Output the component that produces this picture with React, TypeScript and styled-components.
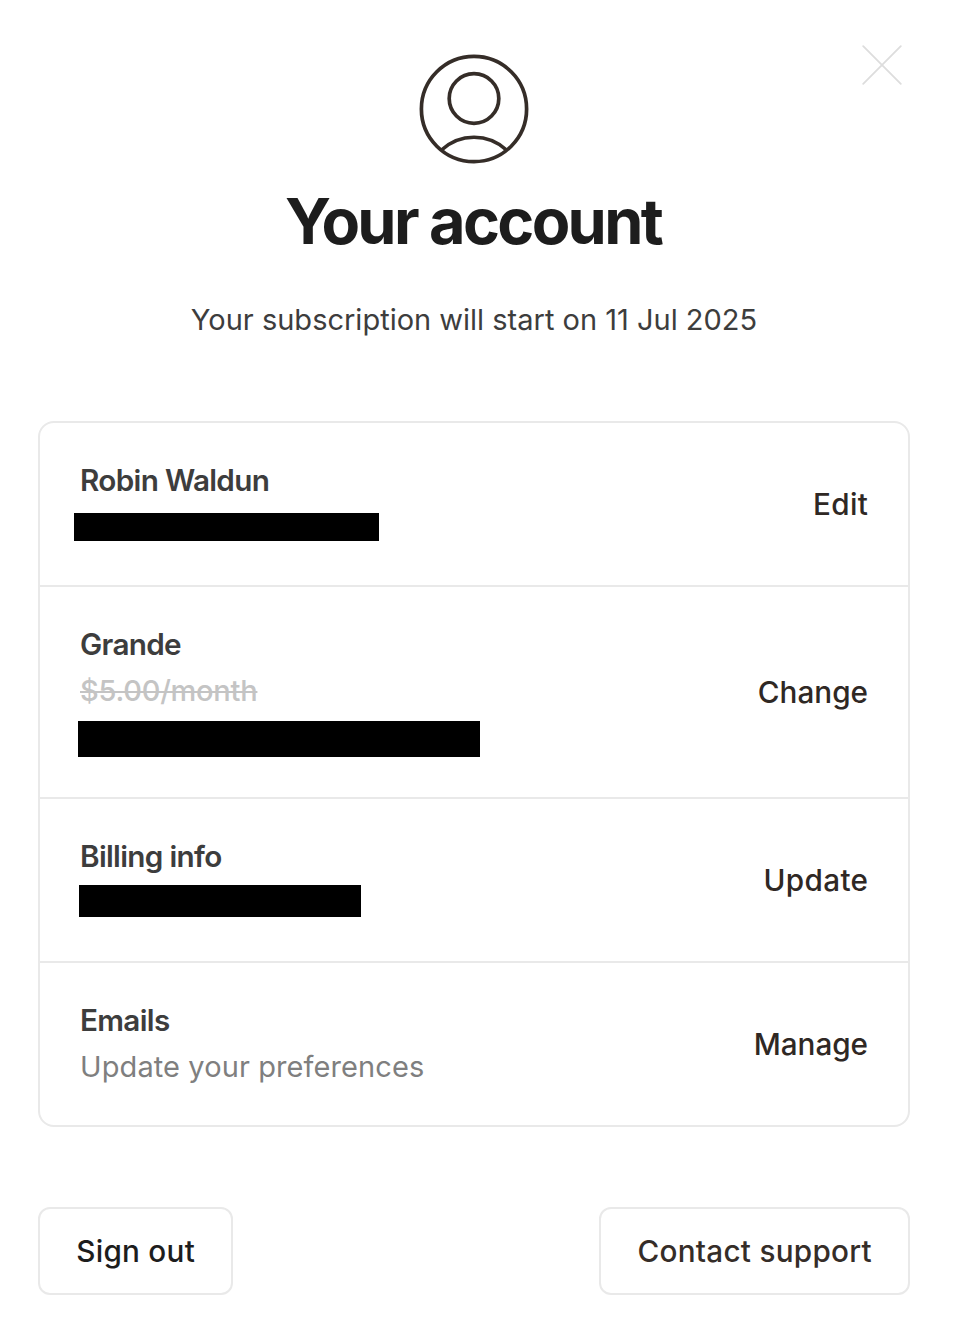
import React from 'react';
import styled, { createGlobalStyle } from 'styled-components';

const Global = createGlobalStyle`
  * { box-sizing: border-box; }
  body { margin: 0; background: #fff; font-family: Inter, "Liberation Sans", sans-serif; -webkit-font-smoothing: antialiased; }
  button { font-family: inherit; background: none; border: 0; padding: 0; margin: 0; }
`;
const Popup = styled.main`
  position: relative; width: 956px; height: 1324px; padding: 54px 46px 0 38px; background: #fff; overflow: hidden;
`;
const CloseButton = styled.button`
  position: absolute; top: 45px; right: 54px; width: 40px; height: 40px;
  svg { display: block; }
`;
const Header = styled.header`
  display: flex; flex-direction: column; align-items: center;
`;
const Title = styled.h1`
  margin: 23px 0 0; font-size: 63px; line-height: 68px; font-weight: 740; color: #1d1d1d; white-space: nowrap;
  letter-spacing: -2.7px; text-indent: -2px;
`;
const Notice = styled.p`
  margin: 44px 0 0; font-size: 29px; line-height: 42px; color: #3d3d3d; white-space: nowrap;
`;
const List = styled.section`
  margin-top: 80px; border: 2px solid #e9e9e9; border-radius: 16px;
`;
const Row = styled.div<{ $height: number }>`
  display: flex; justify-content: space-between; height: ${p => p.$height}px; padding: 34px 40px 0;
  & + & { border-top: 2px solid #e9e9e9; }
`;
const Name = styled.h3`
  margin: 0; font-size: 29.7px; line-height: 46px; font-weight: 620; color: #3d3d3d; white-space: nowrap; letter-spacing: -0.68px;
`;
const Detail = styled.p<{ $old?: boolean }>`
  margin: 0; padding-top: 1px; font-size: 29px; line-height: 46px; white-space: nowrap;
  letter-spacing: ${p => (p.$old ? -0.25 : 0.1)}px;
  font-weight: ${p => (p.$old ? 450 : 400)};
  color: ${p => (p.$old ? '#c4c4c4' : '#7f7f7f')};
  text-decoration: ${p => (p.$old ? 'line-through' : 'none')};
  text-decoration-thickness: 2px;
`;
const Redacted = styled.div<{ $width: number; $height: number; $top: number; $left: number }>`
  width: ${p => p.$width}px; height: ${p => p.$height}px; margin: ${p => p.$top}px 0 0 ${p => p.$left}px; background: #000;
`;
const Action = styled.button<{ $ls: number; $top: number }>`
  align-self: flex-start; margin-top: ${p => p.$top}px; height: 46px;
  font-size: 29.7px; line-height: 46px; font-weight: 500; color: #2f2824; letter-spacing: ${p => p.$ls}px; margin-right: ${p => -p.$ls}px;
`;
const Footer = styled.footer`
  display: flex; justify-content: space-between; margin-top: 80px;
`;
const FooterButton = styled.button<{ $width: number; $color: string }>`
  width: ${p => p.$width}px; height: 88px; border: 2px solid #e9e9e9; border-radius: 12px; font-size: 29.7px; font-weight: 500;
  color: ${p => p.$color}; white-space: nowrap; letter-spacing: 0.27px; text-indent: 0.27px;
`;

export default function App() {
  return (
    <Popup>
      <Global />
      <CloseButton aria-label="Close">
        <svg width="40" height="40" viewBox="0 0 40 40" stroke="#dddddd" strokeWidth="1.8" strokeLinecap="round">
          <path d="M1.2 1.2L38.8 38.8M38.8 1.2L1.2 38.8" />
        </svg>
      </CloseButton>
      <Header>
        <svg width="110" height="110" viewBox="0 0 110 110" fill="none" stroke="#352d28" strokeWidth="3.7">
          <circle cx="55" cy="55" r="52.6" />
          <circle cx="55" cy="44.5" r="24.8" />
          <path d="M22.5 96C41 79 69 79 87.5 96" />
        </svg>
        <Title>Your account</Title>
        <Notice>Your subscription will start on 11 Jul 2025</Notice>
      </Header>
      <List>
        <Row $height={162}>
          <div>
            <Name>Robin Waldun</Name>
            <Redacted $width={304.5} $height={28} $top={10} $left={-6} />
          </div>
          <Action $ls={0.4} $top={24}>Edit</Action>
        </Row>
        <Row $height={212}>
          <div>
            <Name>Grande</Name>
            <Detail $old>$5.00/month</Detail>
            <Redacted $width={402} $height={36} $top={7} $left={-2.5} />
          </div>
          <Action $ls={0} $top={48}>Change</Action>
        </Row>
        <Row $height={164}>
          <div>
            <Name>Billing info</Name>
            <Redacted $width={282} $height={32} $top={6} $left={-1.5} />
          </div>
          <Action $ls={0.35} $top={24}>Update</Action>
        </Row>
        <Row $height={164}>
          <div>
            <Name>Emails</Name>
            <Detail>Update your preferences</Detail>
          </div>
          <Action $ls={-0.05} $top={24}>Manage</Action>
        </Row>
      </List>
      <Footer>
        <FooterButton $width={195} $color="#1d1d1d">Sign out</FooterButton>
        <FooterButton $width={311} $color="#352d28">Contact support</FooterButton>
      </Footer>
    </Popup>
  );
}
